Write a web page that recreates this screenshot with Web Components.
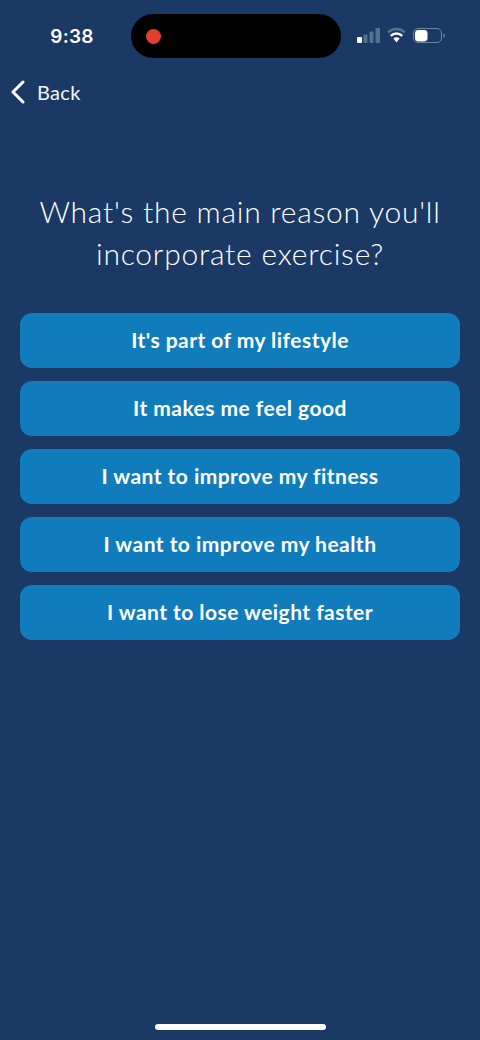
<!DOCTYPE html>
<html lang="en">
<head>
<meta charset="utf-8">
<title>Exercise reason</title>
<style>
    html, body {
        margin: 0;
        padding: 0;
        background: #1a3965;
    }
</style>
</head>
<body>
<quiz-screen>
    <status-bar slot="status"></status-bar>
    <back-link slot="nav">Back</back-link>
    <span slot="title">What's the main reason you'll<br>incorporate exercise?</span>
    <answer-button>It's part of my lifestyle</answer-button>
    <answer-button>It makes me feel good</answer-button>
    <answer-button>I want to improve my fitness</answer-button>
    <answer-button>I want to improve my health</answer-button>
    <answer-button>I want to lose weight faster</answer-button>
</quiz-screen>

<script>
const statusTemplate = document.createElement('template');
statusTemplate.innerHTML = `
<style>
    :host {
        display: block;
        height: 58px;
        padding-top: 14px;
        box-sizing: border-box;
    }
    .bar {
        display: grid;
        grid-template-columns: 131px 210px 1fr;
        height: 44px;
        align-items: center;
    }
    .time {
        text-align: center;
        padding-left: 13px;
        box-sizing: border-box;
        font: 600 19px "Inter", "Liberation Sans", sans-serif;
        color: #fff;
        letter-spacing: 0.2px;
    }
    .island {
        height: 44px;
        border-radius: 22px;
        background: #000;
        display: flex;
        align-items: center;
        padding-left: 15px;
        box-sizing: border-box;
    }
    .dot {
        width: 15px;
        height: 15px;
        border-radius: 50%;
        background: #e2402f;
    }
    .icons {
        display: flex;
        align-items: center;
        padding-left: 16px;
    }
    svg { display: block; }
</style>
<div class="bar">
    <div class="time">9:38</div>
    <div class="island"><div class="dot"></div></div>
    <div class="icons">
        <svg width="90" height="20" viewBox="0 0 90 20">
            <!-- signal -->
            <rect x="0" y="11" width="5" height="6" rx="1" fill="#fff"/>
            <rect x="6.5" y="8.5" width="4" height="8.5" rx="1" fill="#56708f"/>
            <rect x="12.5" y="5.5" width="4" height="11.5" rx="1" fill="#56708f"/>
            <rect x="18.5" y="2" width="4.5" height="15" rx="1" fill="#56708f"/>
            <!-- wifi -->
            <path d="M31 6.4 C35.8 1.8 43.2 1.8 48 6.4" fill="none" stroke="#56708f" stroke-width="2.4"/>
            <path d="M33.8 9.8 C37 6.8 42 6.8 45.2 9.8" fill="none" stroke="#fff" stroke-width="2.4"/>
            <path d="M36.4 12.6 C38.2 10.8 40.8 10.8 42.6 12.6 L39.5 16.6 Z" fill="#fff"/>
            <!-- battery -->
            <rect x="56.5" y="2.5" width="28" height="14" rx="4.5" fill="none" stroke="#6f86a3" stroke-width="1"/>
            <rect x="58" y="4" width="12.5" height="11.5" rx="3.4" fill="#fff"/>
            <path d="M86.5 7.5 C87.6 7.9 88 8.7 88 9.5 C88 10.3 87.6 11.1 86.5 11.5 Z" fill="#6f86a3"/>
        </svg>
    </div>
</div>`;

class StatusBar extends HTMLElement {
    constructor() {
        super();
        this.attachShadow({ mode: 'open' });
        this.shadowRoot.appendChild(statusTemplate.content.cloneNode(true));
    }
}
customElements.define('status-bar', StatusBar);

const backTemplate = document.createElement('template');
backTemplate.innerHTML = `
<style>
    :host {
        display: flex;
        align-items: center;
        gap: 12px;
        height: 30px;
        padding-left: 10px;
        color: #f2f6fb;
        font: 400 20px "Lato", "Liberation Sans", sans-serif;
        letter-spacing: 0.3px;
    }
    svg { display: block; }
</style>
<svg width="15" height="24" viewBox="0 0 15 24">
    <path d="M13 2 L3 12 L13 22" fill="none" stroke="#fff" stroke-width="3" stroke-linecap="round" stroke-linejoin="round"/>
</svg>
<slot></slot>`;

class BackLink extends HTMLElement {
    constructor() {
        super();
        this.attachShadow({ mode: 'open' });
        this.shadowRoot.appendChild(backTemplate.content.cloneNode(true));
    }
}
customElements.define('back-link', BackLink);

const answerTemplate = document.createElement('template');
answerTemplate.innerHTML = `
<style>
    :host {
        display: flex;
        align-items: center;
        justify-content: center;
        height: 55px;
        padding-bottom: 3px;
        box-sizing: border-box;
        border-radius: 12px;
        background: #117cbb;
        color: #fff;
        font: 700 21px "Lato", "Liberation Sans", sans-serif;
        letter-spacing: 0.46px;
    }
</style>
<slot></slot>`;

class AnswerButton extends HTMLElement {
    constructor() {
        super();
        this.attachShadow({ mode: 'open' });
        this.shadowRoot.appendChild(answerTemplate.content.cloneNode(true));
    }
}
customElements.define('answer-button', AnswerButton);

const screenTemplate = document.createElement('template');
screenTemplate.innerHTML = `
<style>
    :host {
        display: flex;
        flex-direction: column;
        width: 480px;
        height: 1040px;
        overflow: hidden;
        background: #1a3965;
    }
    .nav {
        padding-top: 19px;
    }
    h1 {
        margin: 83px 0 0;
        height: 84px;
        font: 300 30px/42px "Lato", "Liberation Sans", sans-serif;
        letter-spacing: 0.76px;
        color: #fff;
        text-align: center;
    }
    .answers {
        display: flex;
        flex-direction: column;
        gap: 13px;
        margin: 39px 20px 0;
    }
    .spacer { flex: 1; }
    .home {
        width: 171px;
        height: 6px;
        border-radius: 3px;
        background: #fff;
        margin: 0 auto 10px;
    }
</style>
<slot name="status"></slot>
<div class="nav"><slot name="nav"></slot></div>
<h1><slot name="title"></slot></h1>
<div class="answers"><slot></slot></div>
<div class="spacer"></div>
<div class="home"></div>`;

class QuizScreen extends HTMLElement {
    constructor() {
        super();
        this.attachShadow({ mode: 'open' });
        this.shadowRoot.appendChild(screenTemplate.content.cloneNode(true));
    }
}
customElements.define('quiz-screen', QuizScreen);
</script>
</body>
</html>
